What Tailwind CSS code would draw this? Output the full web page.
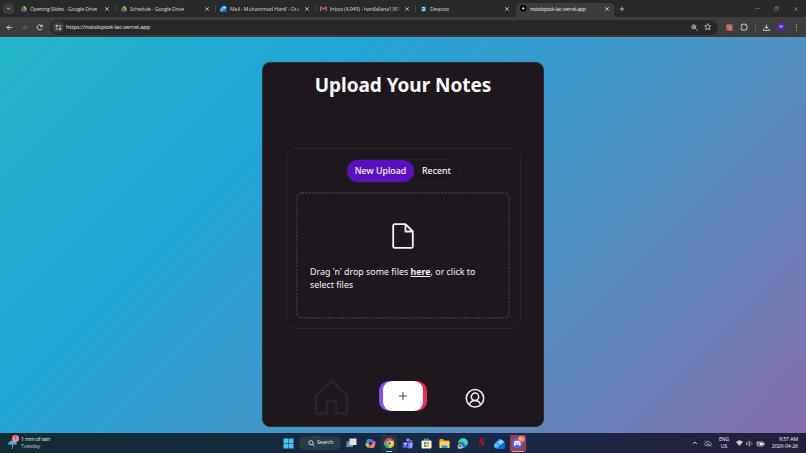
<!DOCTYPE html>
<html lang="en">
<head>
<meta charset="utf-8">
<title>Upload Your Notes</title>
<script src="https://cdn.jsdelivr.net/npm/@tailwindcss/browser@4"></script>
</head>
<body class="w-[806px] h-[453px] overflow-hidden flex flex-col font-['Open_Sans',sans-serif] text-[5.3px] leading-none text-[#d2d2d2] bg-[#292929]">
<svg class="hidden">
  <symbol id="x" viewBox="0 0 6 6"><path d="M1.2 1.2l3.6 3.6M4.8 1.2L1.2 4.8" stroke="currentColor" stroke-width=".75" fill="none"/></symbol>
  <symbol id="drive" viewBox="0 0 24 22"><path d="M8 0h8l8 14h-8z" fill="#fbbc04"/><path d="M8 0l4 7L4 21 0 14z" fill="#20a65b"/><path d="M8 14h16l-4 7H4z" fill="#3b82f6"/></symbol>
  <symbol id="mail" viewBox="0 0 24 24"><path d="M3 9L13 1l10 7v12a4 4 0 0 1-4 4H7a4 4 0 0 1-4-4z" fill="#238cf0"/><path d="M7 9l9-6 6 5-9 7z" fill="#8fd2ff"/><path d="M4 12l9 5 10-7v10a4 4 0 0 1-4 4H8a4 4 0 0 1-4-4z" fill="#1368dc"/><rect x="0" y="11" width="11" height="11" rx="2" fill="#1e8af5"/><circle cx="5.500" cy="16.500" r="2.800" fill="none" stroke="#fff" stroke-width="1.500"/></symbol>
</svg>

<!-- tab strip -->
<div class="h-[17px] shrink-0 flex items-stretch bg-[#292929] tracking-[-0.2px]">
  <div class="w-[16px] flex items-center pl-[3px]"><div class="size-[11px] rounded-[3.5px] bg-[#3b3b3b] flex items-center justify-center"><svg class="size-[5px]" viewBox="0 0 6 6"><path d="M1.3 2.2L3 4l1.7-1.8" stroke="#eee" stroke-width=".9" fill="none"/></svg></div></div>
  <div class="w-[100px] flex items-center pl-[5px] pr-[6px] relative"><svg class="w-[6px] h-[6px] mr-[3px]"><use href="#drive"/></svg><span class="whitespace-nowrap leading-[8px]">Opening Slides - Google Drive</span><svg class="size-[6px] ml-auto"><use href="#x"/></svg><i class="absolute right-0 top-[5px] w-px h-[7px] bg-[#424242]"></i></div>
  <div class="w-[100px] flex items-center pl-[5px] pr-[6px] relative"><svg class="w-[6px] h-[6px] mr-[3px]"><use href="#drive"/></svg><span class="whitespace-nowrap leading-[8px]">Schedule - Google Drive</span><svg class="size-[6px] ml-auto"><use href="#x"/></svg><i class="absolute right-0 top-[5px] w-px h-[7px] bg-[#424242]"></i></div>
  <div class="w-[100px] flex items-center pl-[4px] pr-[6px] relative"><svg class="w-[7px] h-[7px] mr-[3px]"><use href="#mail"/></svg><span class="whitespace-nowrap leading-[8px] tracking-[-0.14px] mask-r-from-92%">Mail - Muhammad Hanif - Outl</span><svg class="size-[6px] ml-auto"><use href="#x"/></svg><i class="absolute right-0 top-[5px] w-px h-[7px] bg-[#424242]"></i></div>
  <div class="w-[100px] flex items-center pl-[4px] pr-[6px] relative"><svg class="w-[7px] h-[5px] mr-[3px]" viewBox="0 0 14 10"><path d="M1.5 10V1.5" stroke="#4285f4" stroke-width="3"/><path d="M12.500 10V1.500" stroke="#34a853" stroke-width="3"/><path d="M1 1.500l6 4.500 6-4.500" stroke="#ea4335" stroke-width="3" fill="none"/></svg><span class="whitespace-nowrap leading-[8px] tracking-[-0.17px] mask-r-from-92%">Inbox (4,949) - hanifallana1391</span><svg class="size-[6px] ml-auto"><use href="#x"/></svg><i class="absolute right-0 top-[5px] w-px h-[7px] bg-[#424242]"></i></div>
  <div class="w-[100px] flex items-center pl-[5px] pr-[6px]"><span class="w-[5px] h-[6px] mr-[4px] bg-[#075a80] text-white font-bold text-[4.500px] leading-[6px] text-center">D</span><span class="leading-[8px]">Devpost</span><svg class="size-[6px] ml-auto"><use href="#x"/></svg></div>
  <div class="w-[98px] mt-[3px] pb-[3px] rounded-t-[5px] bg-[#3c3c3c] flex items-center pl-[4px] pr-[4px] text-[#e6e6e6]"><svg class="size-[6.500px] mr-[3.500px]" viewBox="0 0 12 12"><circle cx="6" cy="6" r="6" fill="#000"/><path d="M6 3.200l2.700 4.800H3.300z" fill="#fff"/></svg><span class="leading-[8px] whitespace-nowrap tracking-[-0.24px]">notsloptok-lac.vercel.app</span><svg class="size-[6px] ml-auto"><use href="#x"/></svg></div>
  <div class="flex-1 flex items-center pl-[5px]"><svg class="size-[6px]" viewBox="0 0 6 6"><path d="M3 .8v4.400M.8 3h4.400" stroke="#ddd" stroke-width=".7"/></svg>
    <div class="ml-auto flex items-center gap-[14px] pr-[7px] text-[#858585]"><svg class="size-[5px]" viewBox="0 0 6 6"><path d="M.5 3h5" stroke="currentColor" stroke-width=".7"/></svg><svg class="size-[5px]" viewBox="0 0 6 6"><path d="M.7 2h3.300v3.300H.7zM2 2V.7h3.300V4H4" stroke="currentColor" stroke-width=".7" fill="none"/></svg><svg class="size-[6px]"><use href="#x"/></svg></div>
  </div>
</div>

<!-- address bar -->
<div class="h-[20px] shrink-0 bg-[#3c3c3c] flex items-center pl-[6px] text-[#dedede]">
  <svg class="size-[7px] mr-[8px]" viewBox="0 0 14 14" fill="none" stroke="currentColor" stroke-width="1.700"><path d="M12.500 7H2M7 2L2 7l5 5"/></svg>
  <svg class="size-[7px] mr-[8px] text-[#777]" viewBox="0 0 14 14" fill="none" stroke="currentColor" stroke-width="1.500"><path d="M1.500 7H12M7 2l5 5-5 5"/></svg>
  <svg class="size-[7px] mr-[7px]" viewBox="0 0 14 14" fill="none" stroke="currentColor" stroke-width="1.700"><path d="M12 8.500A5 5 0 1 1 11 3.500L12.500 5M12.500 1v4H8.500"/></svg>
  <div class="h-[15px] w-[668px] rounded-full bg-[#282828] flex items-center pl-[2px] pr-[6.500px]">
    <div class="size-[12px] rounded-full bg-[#3b3b3b] flex items-center justify-center mr-[2px]"><svg class="size-[7px]" viewBox="0 0 14 14" fill="none" stroke="currentColor" stroke-width="1.800"><circle cx="3.500" cy="4" r="1.800"/><path d="M7.500 4H13M1 10h5.500"/><circle cx="10.500" cy="10" r="1.800"/></svg></div>
    <span class="text-[5.800px] leading-[8px] text-[#eee] whitespace-nowrap tracking-[-0.1px]">https://notsloptok-lac.vercel.app</span>
    <svg class="size-[7px] ml-auto" viewBox="0 0 14 14" fill="none" stroke="currentColor" stroke-width="1.500"><circle cx="5.500" cy="5.500" r="4"/><path d="M8.500 8.500l4.500 4.500M3.500 5.500h4M5.500 3.500v4"/></svg>
    <svg class="size-[7.500px] ml-[6.500px]" viewBox="0 0 14 14" fill="none" stroke="currentColor" stroke-width="1.400"><path d="M7 1.200l1.700 3.900 4.200.4-3.200 2.800 1 4.200L7 10.300l-3.700 2.200 1-4.200L1.100 5.500l4.200-.4z"/></svg>
  </div>
  <svg class="size-[7px] ml-[7.500px]" viewBox="0 0 14 14"><rect width="14" height="14" rx="2.500" fill="#a9544d"/><path d="M3 4h4v3H3zM9 3v7M4 10c2 2 6 2 7-1" stroke="#e0a884" stroke-width="1.200" fill="none"/></svg>
  <svg class="size-[8px] ml-[7.500px]" viewBox="0 0 16 16" fill="none" stroke="currentColor" stroke-width="1.700"><path d="M2.500 3.500H6a2 2 0 0 1 4 0h3V7a2 2 0 0 1 0 4v3H2.500v-3.500a2 2 0 0 0 0-3.500z"/></svg>
  <i class="w-px h-[7px] bg-[#5b5b5b] ml-[6.500px]"></i>
  <svg class="size-[7px] ml-[7px]" viewBox="0 0 14 14" fill="none" stroke="currentColor" stroke-width="1.700"><path d="M7 1v7.500M3.500 5.500L7 9l3.500-3.500M1.200 9.500v3.300h11.600V9.500"/></svg>
  <span class="size-[8px] rounded-full bg-[#5428b8] ml-[7.500px] text-[4px] leading-[8px] text-center font-semibold">H</span>
  <svg class="w-[3px] h-[7px] ml-[9.500px]" viewBox="0 0 6 14" fill="currentColor"><circle cx="3" cy="2" r="1.200"/><circle cx="3" cy="7" r="1.200"/><circle cx="3" cy="12" r="1.200"/></svg>
</div>

<!-- page -->
<main class="h-[396px] shrink-0 pt-[25px] flex justify-center items-start bg-[linear-gradient(135deg,#24b5c9_0%,#22a5d7_30%,#528fc3_67%,#866caa_100%)] font-['Noto_Sans',sans-serif] text-[#f6f4f7]">
  <section class="w-[282px] h-[365px] rounded-[8px] bg-[#1e171e] border border-[#292b36] flex flex-col items-center">
    <h1 class="mt-[9px] text-[19px] leading-[26px] tracking-[-0.05px] font-bold text-white whitespace-nowrap">Upload Your Notes</h1>
    <div class="mt-[50px] w-[235px] h-[181px] rounded-[10px] border border-[#2b252c] flex flex-col items-center pt-[10px]">
      <div class="w-[114px] h-[24px] rounded-full border border-[#29222a] flex items-center text-[8.850px] font-medium whitespace-nowrap"><span class="w-[67px] h-[22px] rounded-full bg-[#5c0fbe] leading-[22px] text-center shrink-0">New Upload</span><span class="w-[45px] text-center leading-[22px]">Recent</span></div>
      <div class="relative mt-[9px] w-[214px] h-[127px] pl-[14px] pr-[20px] pt-[31px]">
        <svg class="absolute inset-0 size-full" viewBox="0 0 214 127" fill="none"><rect x=".8" y="1" width="212.400" height="125" rx="5" stroke="#3f3941" stroke-width="1.300" stroke-dasharray="2.200 1.200"/></svg>
        <svg class="block w-[22px] h-[26px] ml-[82px]" viewBox="0 0 22 26" fill="none" stroke="#f5f3f6" stroke-width="1.800" stroke-linejoin="round"><path d="M2.500 1.200h11l7.300 7.300v15a1.300 1.300 0 0 1-1.300 1.300h-17a1.300 1.300 0 0 1-1.300-1.300v-21a1.300 1.300 0 0 1 1.300-1.300zM13.500 1.200v7.300h7.300"/></svg>
        <p class="mt-[17px] text-[8.870px] leading-[12.600px] whitespace-nowrap">Drag 'n' drop some files <b class="underline">here</b>, or click to<br>select files</p>
      </div>
    </div>
    <nav class="mt-[50px] w-full h-[36px] flex items-start pl-[51px]">
      <svg class="w-[35px] h-[36px]" viewBox="0 0 35 36" fill="none" stroke="#2b242c" stroke-width="2.400"><path d="M2 34.500V16.500L17.500 2 33 16.500v18H22v-12h-9v12z"/></svg>
      <div class="ml-[30px] mt-[2px] w-[48px] h-[30px] rounded-[10px] bg-[linear-gradient(90deg,#8350f2_50%,#f32a56_50%)] flex justify-center"><div class="w-[40px] h-[30px] rounded-[9px] bg-white flex items-center justify-center"><svg class="size-[8px]" viewBox="0 0 8 8"><path d="M4 0v8M0 4h8" stroke="#333" stroke-width=".9"/></svg></div></div>
      <svg class="ml-[38px] mt-[9px] size-[20px]" viewBox="0 0 20 20" fill="none" stroke="#f0eef1" stroke-width="1.500"><circle cx="10" cy="10.300" r="8.700"/><circle cx="10" cy="8.800" r="3.700"/><path d="M4.500 16.800c.6-2.700 2.700-4.200 5.500-4.200s4.900 1.500 5.500 4.200"/></svg>
    </nav>
  </section>
</main>

<!-- taskbar -->
<footer class="h-[20px] shrink-0 flex items-center bg-[linear-gradient(90deg,#142b34,#15293e_40%,#1b2745_65%,#251e39)] text-[#f0f0f0]">
  <div class="w-[283px] flex items-center pl-[8px]">
    <div class="relative w-[11px] h-[14px] mr-[2px]"><svg class="absolute left-0 top-[4px] w-[9px] h-[9px]" viewBox="0 0 18 18"><path d="M0 9a9 8 0 0 1 18 0z" fill="#56a9ed"/><path d="M9 9v6q0 2-2 2" stroke="#b9c1c9" stroke-width="1.500" fill="none"/></svg><span class="absolute left-[4px] -top-[1px] size-[7px] rounded-full bg-[#ee8994] text-[#3b1720] text-[5px] leading-[7px] text-center">1</span></div>
    <div class="leading-[7px] text-[5.300px] tracking-[-0.22px]">1 mm of rain<br><span class="text-[#b9c3c8]">Tuesday</span></div>
  </div>
  <svg class="size-[11px]" viewBox="0 0 22 22" fill="#4cc2f7"><path d="M1 1h9.500v9.500H1zM11.500 1H21v9.500h-9.500zM1 11.500h9.500V21H1zM11.500 11.500H21V21h-9.500z"/></svg>
  <div class="ml-[5px] w-[42px] h-[14px] rounded-full bg-[#293b47] flex items-center pl-[9px] text-[5.300px] tracking-[-0.1px]"><svg class="size-[7px] mr-[2px]" viewBox="0 0 14 14" fill="none" stroke="#fff" stroke-width="1.500"><circle cx="6" cy="5.500" r="4.200"/><path d="M9 8.500l4 4.500"/></svg>Search</div>
  <svg class="ml-[5px] w-[11px] h-[10px]" viewBox="0 0 22 20"><rect x="1" y="7" width="13" height="11" fill="#858b91"/><rect x="7" y="1" width="14" height="13" fill="#dfe1e2"/></svg>
  <svg class="ml-[8px] size-[11px]" viewBox="0 0 22 22"><path d="M6 2h7l-4 14H3q-3 0-2-4L3 5q1-3 3-3z" fill="#2995e5"/><path d="M3 11l6 1-2 8q-3 0-4-4l-2-3z" fill="#e9bd3b"/><path d="M13 2q3 0 3 4h3q3 0 2 4l-2 7q-1 3-4 3H8l4-14z" fill="#bd55ce"/><path d="M15 11l6-1-2 7q-1 3-4 3H8l3-5z" fill="#f37955"/><path d="M9 8h5l-1 6H8z" fill="#173050"/></svg>
  <div class="ml-[5px] w-[16px] h-[17px] rounded-[2px] bg-[#223746] relative flex items-center justify-center"><svg class="size-[10.500px]" viewBox="0 0 22 22"><circle cx="11" cy="11" r="10.500" fill="#fbc116"/><path d="M1.900 5.800a10.500 10.500 0 0 1 18.200 0H11L6 14z" fill="#e94335"/><path d="M1.900 5.800L6.500 14 11 16l-1.500 5.400A10.500 10.500 0 0 1 1.900 5.800z" fill="#34a853"/><circle cx="11" cy="11" r="5.200" fill="#fff"/><circle cx="11" cy="11" r="4" fill="#4285f4"/></svg><i class="absolute bottom-0 left-[5px] w-[6px] h-px bg-[#73cdf2]"></i></div>
  <svg class="ml-[5px] size-[11px]" viewBox="0 0 22 22"><circle cx="12" cy="4" r="3.500" fill="#8d8df5"/><circle cx="18.500" cy="6" r="2.500" fill="#6869d9"/><path d="M7 9h14v6q0 6-6 6-5 0-8-4z" fill="#7074e8"/><path d="M15 9h6v6q0 5-5 6z" fill="#a69cff"/><rect x="1" y="8" width="11" height="12" rx="2" fill="#474bbc"/><path d="M3.500 11h6M6.500 11v6" stroke="#fff" stroke-width="1.600"/></svg>
  <svg class="ml-[8px] size-[11px]" viewBox="0 0 22 22"><path d="M7 5V2h8v3" stroke="#5ab9ec" stroke-width="1.800" fill="none"/><rect x="1" y="5" width="20" height="16" rx="2" fill="#f3f3f3"/><path d="M6 8h4.500v4.500H6z" fill="#e95535"/><path d="M11.500 8H16v4.500h-4.500z" fill="#80b82f"/><path d="M6 13.500h4.500V18H6z" fill="#2b9ddd"/><path d="M11.500 13.500H16V18h-4.500z" fill="#f3b51e"/></svg>
  <svg class="ml-[7px] size-[11px]" viewBox="0 0 22 22"><path d="M1 3q0-1 1-1h6l3 3h9q1 0 1 1v5H1z" fill="#e5a320"/><rect x="1" y="7" width="20" height="13" rx="1" fill="#ffd35b"/><path d="M5 20v-4q0-1 1-1h10q1 0 1 1v4z" fill="#3389d5"/></svg>
  <svg class="ml-[7px] size-[11px]" viewBox="0 0 22 22"><circle cx="12" cy="10.500" r="9.800" fill="#1976c9"/><path d="M2.500 9C4 3 8 .7 12 .7c6 0 10 4.300 9.800 9-.2 3.600-3 5.300-6.800 4.300 1-5-5-8-12.500-5z" fill="#49d1a2"/><path d="M9 11q-2 6 5 8-6 3-10-3z" fill="#72c8f0"/><circle cx="6" cy="17" r="5" fill="#b9b4ad"/><circle cx="6" cy="15.500" r="2" fill="#555"/></svg>
  <span class="ml-[8px] w-[11px] text-center text-[10px] leading-[12px] font-bold font-['Liberation_Sans',sans-serif] text-[#c8121f]"><span class="inline-block scale-x-75">N</span></span>
  <svg class="ml-[7px] size-[11px]" viewBox="0 0 24 24"><use href="#mail"/></svg>
  <div class="ml-[4.500px] w-[16px] h-[17px] rounded-[2px] bg-[#8e4551] relative flex items-center justify-center"><svg class="size-[10.500px] mt-px" viewBox="0 0 24 24"><circle cx="12" cy="12" r="12" fill="#5865f2"/><path d="M7 7q5-2 10 0 3 4 3 9-2 2-4 1l-1-2q-3 1-6 0l-1 2q-2 1-4-1 0-5 3-9z" fill="#fff"/><circle cx="9.500" cy="12" r="1.500" fill="#5865f2"/><circle cx="14.500" cy="12" r="1.500" fill="#5865f2"/></svg><span class="absolute right-[1px] top-[1px] h-[6px] w-[7px] rounded-full bg-[#f2777d] text-white text-[3.500px] leading-[6px] text-center">9+</span><i class="absolute bottom-0 left-[2px] w-[12px] h-px bg-[#ee9da3]"></i></div>

  <div class="ml-auto flex items-center pr-[8px] text-[5px]">
    <svg class="size-[6px]" viewBox="0 0 12 12"><path d="M2 8l4-4 4 4" stroke="#eee" stroke-width="1.500" fill="none"/></svg>
    <svg class="ml-[6px] w-[8px] h-[7px]" viewBox="0 0 16 14" fill="none" stroke="#b5b2bd" stroke-width="1.300"><path d="M4 11.500q-3-1-3-3t3-3q1-3 4-3t4 3q3 0 3 3t-3 3zM2 1l12 12M5 9h6"/></svg>
    <div class="ml-[4px] w-[16px] text-center leading-[7px]">ENG<br>US</div>
    <svg class="ml-[4px] w-[7px] h-[6px]" viewBox="0 0 14 12"><path d="M0 4q7-7 14 0L7 12z" fill="#bbb8c3"/><path d="M2 5.500q5-4 10 0M4 8q3-2.500 6 0" stroke="#f6f6f6" fill="none"/></svg>
    <svg class="ml-[2.500px] w-[7px] h-[7px]" viewBox="0 0 14 14" fill="none" stroke="#ddd" stroke-width="1.200"><path d="M1 5h2.500L7 2v10L3.500 9H1zM9 5q2 2 0 4"/><path d="M11 3q4 4 0 8" stroke="#77717f"/></svg>
    <svg class="ml-[3.500px] w-[9px] h-[7px]" viewBox="0 0 18 14"><rect x="2" y="4" width="13" height="8" rx="2" fill="none" stroke="#eee" stroke-width="1.400"/><rect x="7" y="5.500" width="6.500" height="5" fill="#f5f5f5"/><path d="M16.500 6.500v3" stroke="#eee" stroke-width="1.500"/><path d="M4 1L1 7h3l-1 4 4-6H4.500z" fill="#8bd078"/></svg>
    <div class="w-[33px] text-right leading-[7px] text-[5.300px] tracking-[-0.15px] whitespace-nowrap">9:57 AM<br>2026-04-26</div>
  </div>
</footer>
</body>
</html>
